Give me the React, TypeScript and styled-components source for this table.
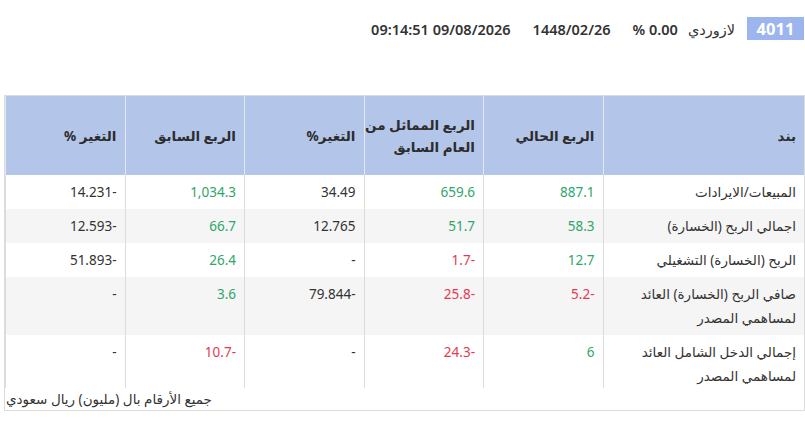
import { createGlobalStyle } from "styled-components";
import styled from "styled-components";

const GlobalStyle = createGlobalStyle`
    body {
        margin: 0;
        background: #fff;
        font-family: "Noto Sans", "Open Sans", "DejaVu Sans", sans-serif;
        color: #333;
    }
`;

type Tone = "up" | "down" | "plain";

interface Row {
    label: string;
    values: { text: string; tone: Tone }[];
}

const rows: Row[] = [
    {
        label: "المبيعات/الايرادات",
        values: [
            { text: "887.1", tone: "up" },
            { text: "659.6", tone: "up" },
            { text: "34.49", tone: "plain" },
            { text: "1,034.3", tone: "up" },
            { text: "-14.231", tone: "plain" },
        ],
    },
    {
        label: "اجمالي الربح (الخسارة)",
        values: [
            { text: "58.3", tone: "up" },
            { text: "51.7", tone: "up" },
            { text: "12.765", tone: "plain" },
            { text: "66.7", tone: "up" },
            { text: "-12.593", tone: "plain" },
        ],
    },
    {
        label: "الربح (الخسارة) التشغيلي",
        values: [
            { text: "12.7", tone: "up" },
            { text: "-1.7", tone: "down" },
            { text: "-", tone: "plain" },
            { text: "26.4", tone: "up" },
            { text: "-51.893", tone: "plain" },
        ],
    },
    {
        label: "صافي الربح (الخسارة) العائد لمساهمي المصدر",
        values: [
            { text: "-5.2", tone: "down" },
            { text: "-25.8", tone: "down" },
            { text: "-79.844", tone: "plain" },
            { text: "3.6", tone: "up" },
            { text: "-", tone: "plain" },
        ],
    },
    {
        label: "إجمالي الدخل الشامل العائد لمساهمي المصدر",
        values: [
            { text: "6", tone: "up" },
            { text: "-24.3", tone: "down" },
            { text: "-", tone: "plain" },
            { text: "-10.7", tone: "down" },
            { text: "-", tone: "plain" },
        ],
    },
];

const headers = ["بند", "الربع الحالي", "الربع المماثل من\nالعام السابق", "التغير%", "الربع السابق", "التغير %"];

export default function App() {
    return (
        <Styled.Root dir="rtl">
            <GlobalStyle />
            <Styled.TopBar>
                <Symbol>4011</Symbol>
                <Info $light>لازوردي</Info>
                <Info>0.00 %</Info>
                <Info $gap>1448/02/26</Info>
                <Info $gap>09/08/2026 09:14:51</Info>
            </Styled.TopBar>

            <Styled.Panel>
                <Table>
                    <colgroup>
                        <col style={{ width: 201 }} />
                        <col />
                        <col />
                        <col />
                        <col />
                        <col />
                    </colgroup>
                    <thead>
                        <tr>
                            {headers.map((h) => (
                                <HeadCell key={h}>{h}</HeadCell>
                            ))}
                        </tr>
                    </thead>
                    <tbody>
                        {rows.map((row, i) => (
                            <BodyRow key={row.label} $striped={i % 2 === 1} $last={i === rows.length - 1}>
                                <LabelCell>{row.label}</LabelCell>
                                {row.values.map((v, j) => (
                                    <ValueCell key={j} $tone={v.tone}>
                                        {v.text}
                                    </ValueCell>
                                ))}
                            </BodyRow>
                        ))}
                    </tbody>
                </Table>
                <Footnote>جميع الأرقام بال (مليون) ريال سعودي</Footnote>
            </Styled.Panel>
        </Styled.Root>
    );
}

const Styled = {
    Root: styled.div`
        width: 805px;
        padding-top: 17px;
        font-size: 13px;
    `,
    TopBar: styled.div`
        display: flex;
        align-items: center;
        gap: 10px;
        height: 23px;
        margin-right: 1px;
    `,
    Panel: styled.div`
        margin: 55px 0 0 4px;
        border: 1px solid #dcdcdc;
    `,
};

const Symbol = styled.span`
    background: #9db5ee;
    color: #fff;
    font-weight: 700;
    font-size: 16.5px;
    width: 57px;
    height: 23px;
    line-height: 23px;
    text-align: center;
    margin-left: 2px;
`;

const Info = styled.span<{ $gap?: boolean; $light?: boolean }>`
    font-size: 14.5px;
    font-weight: ${(p) => (p.$light ? 400 : 600)};
    color: #333;
    margin-right: ${(p) => (p.$gap ? "12px" : "0")};
`;

const Table = styled.table`
    width: 100%;
    table-layout: fixed;
    border-collapse: collapse;
`;

const HeadCell = styled.th`
    background: #b3c6ea;
    height: 79px;
    padding: 0 8px;
    text-align: right;
    font-size: 13.5px;
    font-weight: 700;
    line-height: 22px;
    white-space: pre;
    color: #2d2d2d;
    border-left: 1px solid #e4e8f0;
    vertical-align: middle;
`;

const BodyRow = styled.tr<{ $striped: boolean; $last: boolean }>`
    background: ${(p) => (p.$striped ? "#f5f5f5" : "#fff")};
    & td {
        padding: 5px 8px ${(p) => (p.$last ? "0" : "5px")};
    }
`;

const Cell = styled.td`
    text-align: right;
    vertical-align: top;
    font-size: 13.5px;
    line-height: 24px;
    border-left: 1px solid #dcdcdc;
`;

const LabelCell = styled(Cell)`
    color: #333;
`;

const toneColor: Record<Tone, string> = {
    up: "#2fa66b",
    down: "#e63950",
    plain: "#333",
};

const ValueCell = styled(Cell)<{ $tone: Tone }>`
    color: ${(p) => toneColor[p.$tone]};
`;

const Footnote = styled.div`
    direction: rtl;
    text-align: left;
    font-size: 13.5px;
    line-height: 22px;
    padding: 0 0 0 1px;
    color: #333;
`;
